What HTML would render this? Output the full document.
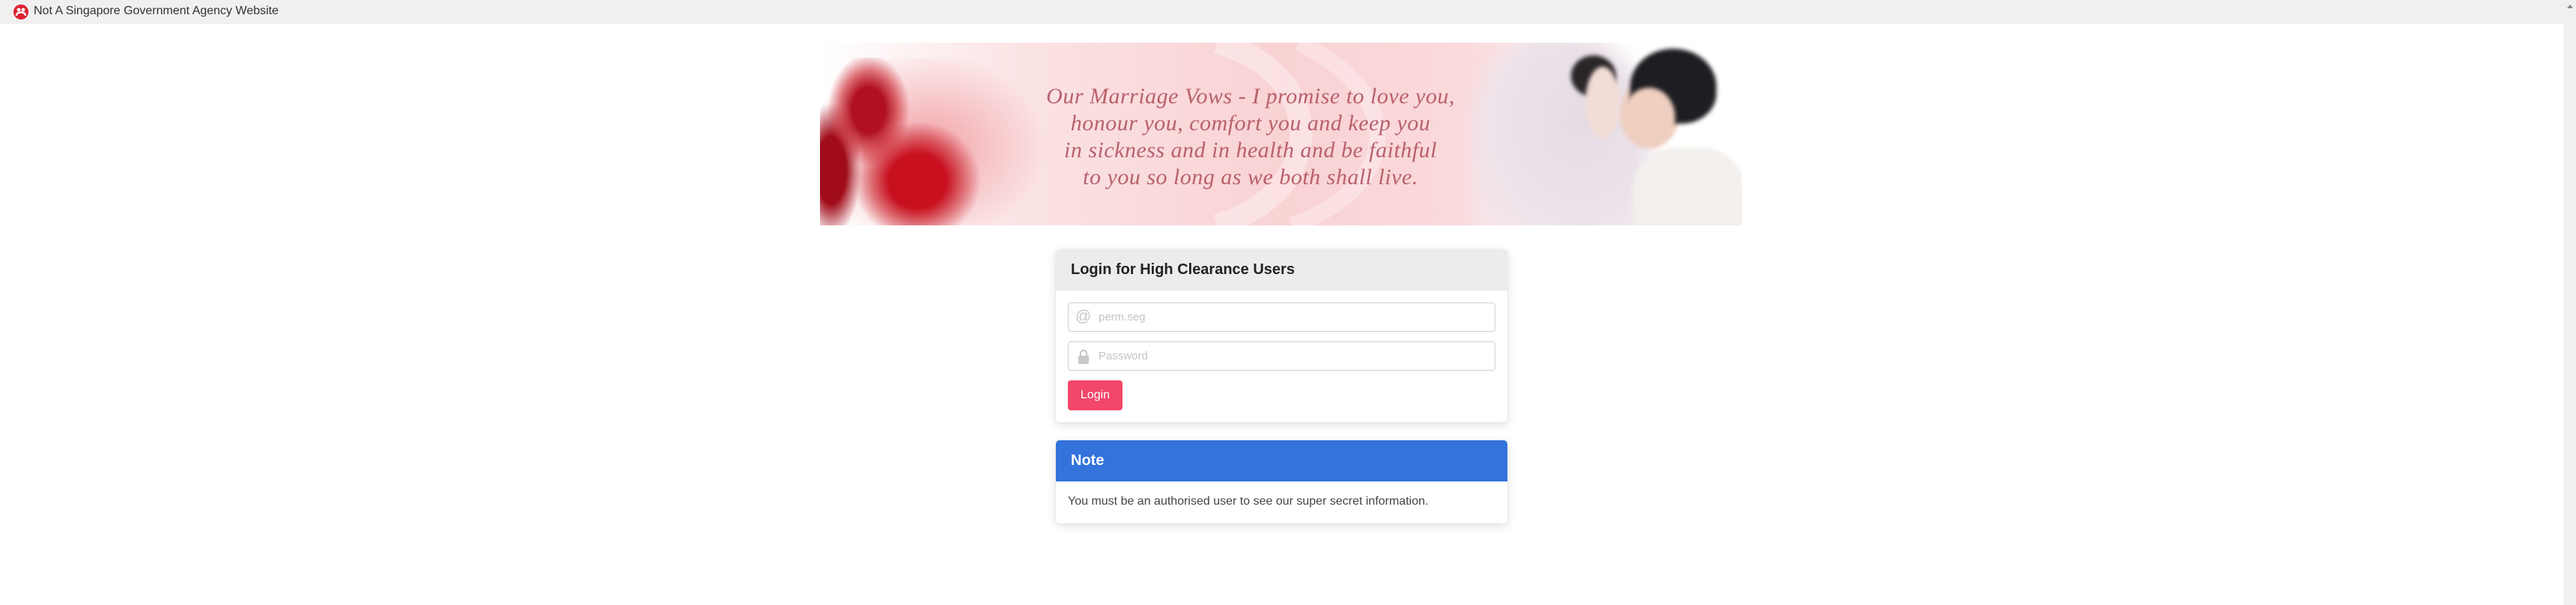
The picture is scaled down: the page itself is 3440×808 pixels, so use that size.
<!DOCTYPE html>
<html><head><meta charset="utf-8"><style>
*{box-sizing:border-box;margin:0;padding:0}
body{width:3440px;height:808px;background:#fff;font-family:"Liberation Sans",sans-serif;position:relative;overflow:hidden}
.top{position:absolute;left:0;top:0;width:3440px;height:32px;background:#f0f0f0}
.top .ic{position:absolute;left:18px;top:6px;width:20px;height:20px;border-radius:50%;background:#e0202f}
.top .t{position:absolute;left:45px;top:6px;font-size:16px;color:#333}
.sb{position:absolute;left:3423px;top:32px;width:17px;height:776px;background:#f0f0f0}
.arrow{position:absolute;left:3428px;top:6px;width:0;height:0;border-left:4px solid transparent;border-right:4px solid transparent;border-bottom:5px solid #888}
.banner{position:absolute;left:1095px;top:57px;width:1231px;height:244px;overflow:hidden;
background:linear-gradient(90deg,#fff 0%,#fbe3e4 22%,#f9d2d4 50%,#fadadc 70%,#fbe8ea 78%,#fff 88%,#fff 100%)}
.roses{position:absolute;left:0;top:20px;width:310px;height:230px;
background:radial-gradient(ellipse 55px 75px at 65px 70px,#b01020 40%,rgba(200,30,40,.6) 70%,transparent 100%),
radial-gradient(ellipse 85px 80px at 130px 165px,#c8101e 45%,rgba(200,30,40,.5) 75%,transparent 100%),
radial-gradient(ellipse 40px 90px at 15px 150px,#a00c1a 50%,transparent 100%),
radial-gradient(ellipse 160px 130px at 140px 120px,rgba(230,80,90,.5),transparent 100%)}
.b{position:absolute;border-radius:50%;filter:blur(3px)}
.vow{position:absolute;left:285px;top:54px;width:580px;text-align:center;font-family:"Liberation Serif",serif;font-style:italic;font-size:30px;line-height:36px;color:#b8606a;letter-spacing:.5px}
.card{position:absolute;left:1410px;width:603px;background:#fff;border-radius:5px;box-shadow:0 3px 12px rgba(0,0,0,.14),0 0 1px rgba(0,0,0,.1);overflow:hidden}
.hd{height:55px;padding-left:20px;font-weight:bold;font-size:20px;line-height:55px}
.login{top:333px;height:231px}
.login .hd{background:#ececec;color:#222}
.inp{position:absolute;left:16px;width:571px;height:39px;border:1px solid #d2d2d2;border-radius:4px;font-size:15px;color:#c4c4c4;line-height:37px;padding-left:40px}
.inp .i{position:absolute;left:9px;top:-1px;font-size:21px;color:#c8c8c8}
.lock{position:absolute;left:12px;top:9px;width:16px;height:20px}
.btn{position:absolute;left:16px;top:175px;width:73px;height:40px;background:#f2466a;border-radius:4px;color:#fff;font-size:16px;line-height:40px;text-align:center}
.note{top:588px;height:111px}
.note .hd{background:#3473dc;color:#fff}
.note p{padding:18px 16px;font-size:16px;color:#444}
</style></head><body>
<div class="top"><div class="ic"><svg width="20" height="20" viewBox="0 0 20 20"><circle cx="7" cy="7" r="2.4" fill="#fff"/><circle cx="13" cy="7" r="2.4" fill="#fff"/><path d="M4 15c0-3 2-4.5 6-4.5s6 1.5 6 4.5" stroke="#fff" stroke-width="2.4" fill="none"/></svg></div><div class="t">Not A Singapore Government Agency Website</div><div class="arrow"></div></div>
<div class="sb"></div>
<div class="banner">
<svg style="position:absolute;left:380px;top:0" width="500" height="244"><path d="M150 0 C 300 40,300 200,150 244" stroke="rgba(255,255,255,.35)" stroke-width="30" fill="none"/><path d="M260 0 C 420 80,380 200,250 244" stroke="rgba(255,255,255,.3)" stroke-width="22" fill="none"/></svg>
<div class="roses"></div>
<div class="b" style="left:870px;top:-10px;width:240px;height:290px;border-radius:45% 45% 10% 10%;filter:blur(12px);background:radial-gradient(ellipse at 60% 40%,#e4dbe4,#ece3ea 55%,rgba(245,235,240,.5) 85%,transparent)"></div>
<div class="b" style="left:1085px;top:140px;width:150px;height:140px;border-radius:40% 40% 0 0;background:#f2efec"></div>
<div class="b" style="left:1068px;top:48px;width:80px;height:92px;background:#efcfc0"></div>
<div class="b" style="left:1082px;top:8px;width:115px;height:100px;border-radius:50% 50% 40% 30%;background:#1e1e22"></div>
<div class="b" style="left:1072px;top:60px;width:70px;height:80px;background:#efcfc0"></div>
<div class="b" style="left:1003px;top:17px;width:60px;height:55px;background:#2a2628"></div>
<div class="b" style="left:1022px;top:32px;width:46px;height:96px;background:#f2dcd6"></div>
<div class="vow">Our Marriage Vows - I promise to love you,<br>honour you, comfort you and keep you<br>in sickness and in health and be faithful<br>to you so long as we both shall live.</div>
</div>
<div class="card login"><div class="hd">Login for High Clearance Users</div>
<div class="inp" style="top:71px"><span class="i">@</span>perm.seg</div>
<div class="inp" style="top:123px"><svg class="lock" viewBox="0 0 16 20"><path d="M4 9V6a4 4 0 0 1 8 0v3" stroke="#c8c8c8" stroke-width="2.2" fill="none"/><rect x="1" y="9" width="14" height="11" rx="1.5" fill="#c8c8c8"/></svg>Password</div>
<div class="btn">Login</div></div>
<div class="card note"><div class="hd">Note</div><p>You must be an authorised user to see our super secret information.</p></div>
</body></html>
